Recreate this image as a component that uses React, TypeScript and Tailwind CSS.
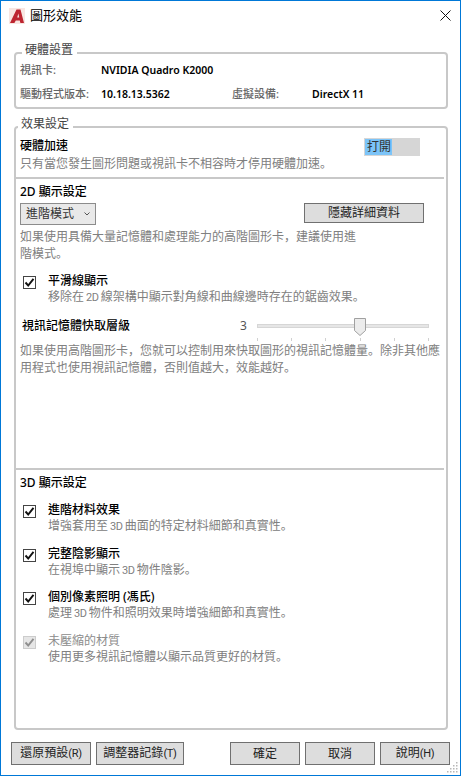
import type { ReactNode } from 'react';

const font = '[font-family:"Noto_Sans","Noto_Sans_CJK_TC",sans-serif]';

// the full-width punctuation sits low-left in the reference, which is the SC form
function P({ children }: { children: ReactNode }) {
  return <span className='[font-family:"Noto_Sans","Noto_Sans_CJK_SC",sans-serif]'>{children}</span>;
}

function Lat({ children }: { children: ReactNode }) {
  return (
    <span className='text-[11px] tracking-[-0.3px] [font-family:"Roboto",sans-serif] [word-spacing:-0.5px]'>
      {children}
    </span>
  );
}

function Check({ disabled }: { disabled?: boolean }) {
  return (
    <span
      className={`flex h-[13px] w-[13px] shrink-0 items-center justify-center border ${
        disabled ? 'border-[#cccccc] bg-[#e6e6e6]' : 'border-[#444444] bg-white'
      }`}
    >
      <svg width="11" height="11" viewBox="0 0 11 11" fill="none">
        <path d="M1.5 5.5 L4.2 8.5 L9.5 1.8" stroke={disabled ? '#8f8f8f' : '#111111'} strokeWidth="1.9" />
      </svg>
    </span>
  );
}

function CheckRow({
  title,
  children,
  disabled,
  className,
}: {
  title: string;
  children: ReactNode;
  disabled?: boolean;
  className?: string;
}) {
  return (
    <div className={`flex ${className ?? ''}`}>
      <div className="mt-[3px] mr-[12px] ml-[3px]">
        <Check disabled={disabled} />
      </div>
      <div>
        <div className={`h-4 leading-4 ${disabled ? 'text-[#8c8c8c]' : 'font-medium text-black'}`}>{title}</div>
        <div className="h-4 leading-4 text-[#808080]">{children}</div>
      </div>
    </div>
  );
}

function Btn({ children, className }: { children: ReactNode; className?: string }) {
  return (
    <button className={`h-[23px] border border-[#707070] bg-[#dddddd] text-center text-[#222222] ${className ?? ''}`}>
      {children}
    </button>
  );
}

function Group({ title, className, children }: { title: string; className?: string; children: ReactNode }) {
  return (
    <fieldset className={`mr-[12px] ml-[13px] shrink-0 rounded-[4px] border-2 border-[#c8c8c8] ${className ?? ''}`}>
      <legend className="ml-[2px] h-[22px] pr-[4px] pl-[3px] leading-4 text-[#444444]">{title}</legend>
      {children}
    </fieldset>
  );
}

function DescLine({ children }: { children: ReactNode }) {
  return <div className="h-[17px] leading-[17px] whitespace-nowrap text-[#808080]">{children}</div>;
}

export default function App() {
  return (
    <div className={`relative flex h-[776px] w-[461px] flex-col border border-[#0078d7] bg-white text-[12px] ${font}`}>
      <header className="flex h-[29px] shrink-0 items-center pr-[7px] pl-[8px]">
        <svg width="16" height="16" viewBox="0 0 16 16" className="mr-[5px]">
          <rect width="16" height="16" fill="#f8e6e2" />
          <path d="M1 15 L7.5 1.5 H11.5 L15 15 H11.4 L10.8 12.4 H6.8 L5.4 15 Z" fill="#bd2530" />
          <path d="M8.2 9.6 H10.2 L9.4 5.6 Z" fill="#f8e6e2" />
        </svg>
        <span className="mt-[1px] text-[13px] text-black">圖形效能</span>
        <svg width="11" height="11" viewBox="0 0 11 11" className="mr-[2px] ml-auto" stroke="#111111" fill="none">
          <path d="M0.5 0.5 L10.5 10.5 M10.5 0.5 L0.5 10.5" />
        </svg>
      </header>

      <Group title="硬體設置" className="mt-[12px] h-[67px] px-[4px]">
        <div className="-mt-[2px] flex h-4 items-center leading-4">
          <span className="w-[81px] text-[11px] font-medium text-[#666666]">視訊卡:</span>
          <span className="text-[10.5px] font-semibold text-black">NVIDIA Quadro K2000</span>
        </div>
        <div className="mt-[8px] flex h-4 items-center leading-4">
          <span className="w-[81px] text-[11px] font-medium text-[#666666]">驅動程式版本:</span>
          <span className="w-[131px] text-[10.5px] font-semibold text-black">10.18.13.5362</span>
          <span className="w-[80px] text-[11px] font-medium text-[#666666]">虛擬設備:</span>
          <span className="text-[10.5px] font-semibold text-black">DirectX 11</span>
        </div>
      </Group>

      <Group title="效果設定" className="mt-[7px] h-[614px]">
        <div className="relative px-[4px]">
          <div className="h-4 leading-4 font-medium text-black">硬體加速</div>
          <div className="mt-[2px] h-4 leading-4 text-[#808080]">
            只有當您發生圖形問題或視訊卡不相容時才停用硬體加速<P>{'\u3002'}</P>
          </div>
          <div className="absolute top-0 left-[348px] flex h-[18px] w-[56px] bg-[#d6d6d6]">
            <span className="my-[1px] ml-[1px] w-[27px] bg-[#7cc4f8] pl-[2px] leading-[16px] text-[#333333]">打開</span>
          </div>
        </div>
        <div className="mt-[5px] mr-[2px] h-[2px] bg-[#c8c8c8]" />

        <div className="px-[4px]">
          <div className="mt-[5px] h-4 leading-4 font-medium text-black">2D 顯示設定</div>
          <div className="mt-[3px] flex items-start justify-between pr-[18px]">
            <span className="flex h-[22px] w-[76px] items-center border border-[#8c8c8c] bg-[#e9e9e9] pl-[5px] text-[#333333]">
              進階模式
              <svg width="6" height="4" viewBox="0 0 6 4" className="ml-[10px]" fill="none" stroke="#555555">
                <path d="M0.5 0.5 L3 3 L5.5 0.5" />
              </svg>
            </span>
            <Btn className="!h-5 w-[120px]">隱藏詳細資料</Btn>
          </div>
          <div className="mt-[3px]">
            <DescLine>
              如果使用具備大量記憶體和處理能力的高階圖形卡<P>{'\uFF0C'}</P>建議使用進
            </DescLine>
            <DescLine>
              階模式<P>{'\u3002'}</P>
            </DescLine>
          </div>
          <CheckRow className="mt-[11px]" title="平滑線顯示">
            移除在<Lat> 2D </Lat>線架構中顯示對角線和曲線邊時存在的鋸齒效果<P>{'\u3002'}</P>
          </CheckRow>

          <div className="mt-[13px] ml-[2px] flex h-4 items-center leading-4">
            <span className="w-[218px] font-medium text-black">視訊記憶體快取層級</span>
            <span className="w-[17px] text-[#555555]">3</span>
            <div className="relative h-4 w-[172px]">
              <div className="absolute top-[6px] right-0 left-0 h-[4px] border border-[#d6d6d6] bg-[#e6e6e6]" />
              <svg width="12" height="18" viewBox="0 0 12 18" className="absolute top-0 left-[97px]">
                <path d="M0.5 0.5 H11.5 V12.5 L6 17.5 L0.5 12.5 Z" fill="#ececec" stroke="#a0a0a0" />
              </svg>
              <div className="absolute top-[20px] right-0 left-0 flex justify-between">
                {[0, 1, 2, 3, 4, 5].map((tick) => (
                  <span key={tick} className="h-[3px] w-px bg-[#d0d0d0]" />
                ))}
              </div>
            </div>
          </div>
          <div className="mt-[8px]">
            <DescLine>
              如果使用高階圖形卡<P>{'\uFF0C'}</P>您就可以控制用來快取圖形的視訊記憶體量<P>{'\u3002'}</P>除非其他應
            </DescLine>
            <DescLine>
              用程式也使用視訊記憶體<P>{'\uFF0C'}</P>否則值越大<P>{'\uFF0C'}</P>效能越好<P>{'\u3002'}</P>
            </DescLine>
          </div>
        </div>

        <div className="mt-[92px] mr-[2px] h-[2px] bg-[#c8c8c8]" />

        <div className="px-[4px]">
          <div className="mt-[5px] h-4 leading-4 font-medium text-black">3D 顯示設定</div>
          <CheckRow className="mt-[11px]" title="進階材料效果">
            增強套用至<Lat> 3D </Lat>曲面的特定材料細節和真實性<P>{'\u3002'}</P>
          </CheckRow>
          <CheckRow className="mt-[12px]" title="完整陰影顯示">
            在視埠中顯示<Lat> 3D </Lat>物件陰影<P>{'\u3002'}</P>
          </CheckRow>
          <CheckRow className="mt-[11px]" title="個別像素照明 (馮氏)">
            處理<Lat> 3D </Lat>物件和照明效果時增強細節和真實性<P>{'\u3002'}</P>
          </CheckRow>
          <CheckRow className="mt-[12px]" disabled title="未壓縮的材質">
            使用更多視訊記憶體以顯示品質更好的材質<P>{'\u3002'}</P>
          </CheckRow>
        </div>
      </Group>

      <footer className="mt-[12px] flex gap-[5px] px-[10px]">
        <Btn className="w-[80px]">還原預設<Lat>(R)</Lat></Btn>
        <Btn className="w-[88px]">調整器記錄<Lat>(T)</Lat></Btn>
        <Btn className="ml-auto w-[70px]">確定</Btn>
        <Btn className="w-[70px]">取消</Btn>
        <Btn className="w-[70px]">說明<Lat>(H)</Lat></Btn>
      </footer>

      <svg width="12" height="12" viewBox="0 0 12 12" className="absolute right-[2px] bottom-[2px]" fill="#b8b8b8">
        <rect x="10" y="1" width="1.5" height="1.5" />
        <rect x="7" y="4" width="1.5" height="1.5" />
        <rect x="10" y="4" width="1.5" height="1.5" />
        <rect x="4" y="7" width="1.5" height="1.5" />
        <rect x="7" y="7" width="1.5" height="1.5" />
        <rect x="10" y="7" width="1.5" height="1.5" />
        <rect x="1" y="10" width="1.5" height="1.5" />
        <rect x="4" y="10" width="1.5" height="1.5" />
        <rect x="7" y="10" width="1.5" height="1.5" />
        <rect x="10" y="10" width="1.5" height="1.5" />
      </svg>
    </div>
  );
}
